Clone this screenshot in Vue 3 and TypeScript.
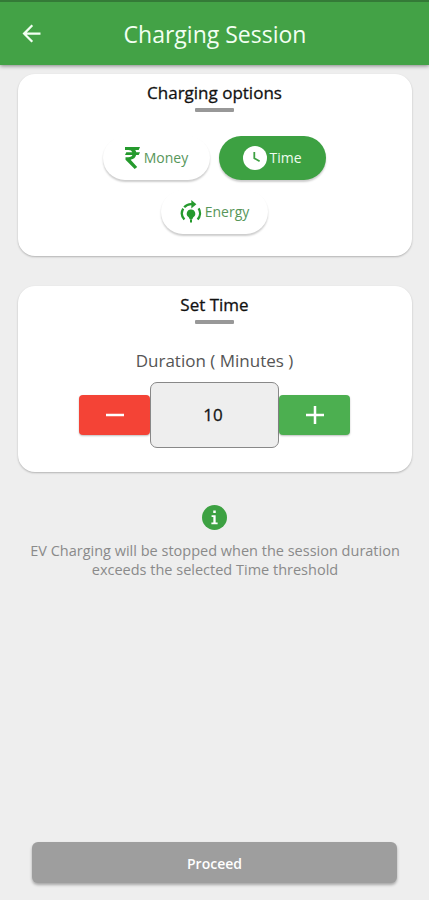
<script setup lang="ts">
import { computed, ref } from 'vue'

type Option = 'Money' | 'Time' | 'Energy'

const options: Option[] = ['Money', 'Time', 'Energy']
const selected = ref<Option>('Time')
const minutes = ref<number>(10)
const heading = computed(() => `Set ${selected.value}`)

function step(delta: number): void {
  minutes.value = Math.max(0, minutes.value + delta)
}
</script>

<template>
  <div class="screen">
    <header class="bar">
      <button class="back" aria-label="Back">
        <svg viewBox="0 0 24 24" width="27" height="27">
          <path d="M20 11H7.83l5.59-5.59L12 4l-8 8 8 8 1.41-1.41L7.83 13H20z" fill="currentColor" />
        </svg>
      </button>
      <h1 class="title">Charging Session</h1>
    </header>

    <main class="content">
      <section class="card options-card">
        <h2 class="heading">Charging options</h2>
        <span class="rule"></span>
        <div class="pills">
          <button
            v-for="option in options"
            :key="option"
            class="pill"
            :class="[option.toLowerCase(), { active: option === selected }]"
            @click="selected = option"
          >
            <svg v-if="option === 'Money'" class="rupee" viewBox="0 0 15 22" width="15" height="22">
              <path d="M0 0H15L13.7 3H10.2Q11 4 11.2 5.2H15L13.7 8.1H11.1Q10.2 12 5.6 12.8L12.2 20L9.7 22L0.5 12.8V10.2H3.3Q6.7 10.2 7.4 8.1H0L1.3 5.2H7.3Q6.5 3 3.5 3H0Z" fill="currentColor" />
            </svg>
            <svg v-else-if="option === 'Time'" class="clock" viewBox="0 0 24 24" width="24" height="24">
              <circle cx="12" cy="12" r="12" fill="currentColor" />
              <path d="M11.3 6V12.2L16.6 15.2" class="hands" />
            </svg>
            <svg v-else class="energy-icon" viewBox="0 0 22 24" width="22" height="24">
              <path d="M4.4 19.6A9.4 9.4 0 0 1 3.2 8.6M4.2 7.2A9.4 9.4 0 0 1 12 4.1M18.6 8.4A9.4 9.4 0 0 1 17.6 19.6" class="arc" />
              <path d="M11.3 0L16.4 4.3L11.3 8.4Z" fill="currentColor" />
              <path d="M11 9.6A4.1 4.1 0 0 0 8.7 17.2L9.7 19.3H12.3L13.3 17.2A4.1 4.1 0 0 0 11 9.6ZM10 19H12V22.6H10Z" fill="currentColor" />
            </svg>
            <span class="label">{{ option }}</span>
          </button>
        </div>
      </section>

      <section class="card time-card">
        <h2 class="heading set">{{ heading }}</h2>
        <span class="rule"></span>
        <p class="duration">Duration ( Minutes )</p>
        <div class="stepper">
          <button class="step minus" aria-label="Decrease" @click="step(-1)">
            <svg viewBox="0 0 18 18" width="18" height="18"><path d="M0 9H18" /></svg>
          </button>
          <output class="value">{{ minutes }}</output>
          <button class="step plus" aria-label="Increase" @click="step(1)">
            <svg viewBox="0 0 18 18" width="18" height="18"><path d="M0 9H18M9 0V18" /></svg>
          </button>
        </div>
      </section>

      <svg class="info" viewBox="0 0 24 24" width="25" height="25">
        <circle cx="12" cy="12" r="12" fill="#3da142" />
        <path d="M10.8 5.2H13.2V7.6H10.8ZM9.2 9.9H13.1V16.8H15V18.4H9V16.8H10.9V11.5H9.2Z" fill="#fff" />
      </svg>
      <p class="note">
        <span class="line one">EV Charging will be stopped when the session duration</span>
        <span class="line two">exceeds the selected Time threshold</span>
      </p>
    </main>

    <footer class="footer">
      <button class="proceed">Proceed</button>
    </footer>
  </div>
</template>

<style>
body {
  margin: 0;
  background: #eee;
}
</style>

<style scoped>
.screen {
  display: flex;
  flex-direction: column;
  box-sizing: border-box;
  width: 100%;
  height: 900px;
  background: #eee;
  font-family: 'Open Sans', 'Noto Sans', sans-serif;
}

button {
  padding: 0;
  border: 0;
  font-family: inherit;
  cursor: pointer;
}

h1,
h2,
p {
  margin: 0;
  font-weight: 400;
}

.bar {
  display: grid;
  grid-template-columns: 63px 1fr 62px;
  align-items: center;
  box-sizing: border-box;
  flex: none;
  height: 65px;
  border-top: 2px solid #347a37;
  background: #43a246;
  color: #f2fff2;
  box-shadow: 0 1px 4px rgba(0, 0, 0, 0.45);
}

.back {
  display: flex;
  justify-content: center;
  background: none;
  color: inherit;
}

.title {
  font-size: 23px;
  line-height: 32px;
  text-align: center;
  white-space: nowrap;
}

.content {
  display: flex;
  flex-direction: column;
  align-items: center;
  flex: 1;
  padding: 9px 17px 0 18px;
}

.card {
  display: flex;
  flex-direction: column;
  align-items: center;
  box-sizing: border-box;
  width: 100%;
  padding-right: 1px;
  border-radius: 17px;
  background: #fff;
  box-shadow: 0 1px 2px rgba(0, 0, 0, 0.25);
}

.options-card {
  height: 182px;
}

.time-card {
  height: 186px;
  margin-top: 30px;
}

.heading {
  margin-top: 7px;
  color: #111;
  font-size: 17px;
  line-height: 24px;
  -webkit-text-stroke: 0.3px currentColor;
}

.rule {
  width: 39px;
  height: 4px;
  margin-top: 3px;
  border-radius: 1px;
  background: #989898;
}

.pills {
  display: flex;
  flex-wrap: wrap;
  justify-content: center;
  gap: 10px 9px;
  width: 240px;
  margin-top: 24px;
}

.pill {
  display: flex;
  align-items: center;
  justify-content: center;
  width: 107px;
  height: 44px;
  border-radius: 22px;
  background: #fff;
  color: #259a2d;
  box-shadow: 0 2px 2px rgba(0, 0, 0, 0.2);
}

.pill .label {
  color: #57965a;
  font-size: 14px;
  line-height: 20px;
}

.pill.active {
  background: #3da142;
  color: #fff;
}

.pill.active .label {
  color: #effcef;
}

.rupee {
  margin-right: 4px;
}

.clock {
  margin-right: 2px;
}

.hands {
  fill: none;
  stroke: #3da142;
  stroke-width: 1.8;
}

.energy-icon {
  margin-right: 3px;
}

.arc {
  fill: none;
  stroke: currentColor;
  stroke-width: 2.3;
}

.duration {
  margin-top: 26px;
  color: #555;
  font-size: 17px;
  line-height: 22px;
}

.stepper {
  display: flex;
  align-items: center;
  justify-content: center;
  margin-top: 10px;
}

.step {
  display: flex;
  align-items: center;
  justify-content: center;
  width: 71px;
  height: 40px;
  border-radius: 4px;
  box-shadow: 0 1px 2px rgba(0, 0, 0, 0.25);
}

.step path {
  fill: none;
  stroke: #fff;
  stroke-width: 2.5;
}

.minus {
  background: #f44336;
}

.plus {
  background: #4caf50;
}

.value {
  box-sizing: border-box;
  width: 129px;
  height: 66px;
  padding-right: 3px;
  border: 1px solid #888;
  border-radius: 7px;
  background: #eee;
  color: #151515;
  font-size: 17px;
  line-height: 64px;
  text-align: center;
  -webkit-text-stroke: 0.3px currentColor;
}

.info {
  margin-top: 33px;
  margin-right: 1px;
}

.note {
  display: flex;
  flex-direction: column;
  align-items: center;
  margin-top: 11px;
  color: #8a8a8a;
  font-size: 14.5px;
  line-height: 19px;
  white-space: nowrap;
}

.footer {
  flex: none;
  padding: 0 32px 17px;
}

.proceed {
  display: block;
  width: 100%;
  height: 41px;
  padding-top: 1px;
  border-radius: 6px;
  background: #9e9e9e;
  color: #fff;
  font-size: 14px;
  font-weight: 600;
  box-shadow: 0 2px 3px rgba(0, 0, 0, 0.3);
}
</style>
